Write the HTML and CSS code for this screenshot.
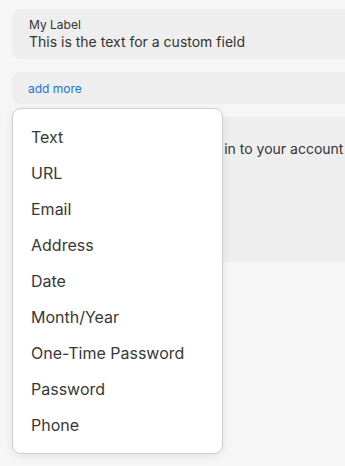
FILE: index.html
```html
<!DOCTYPE html>
<html>
<head>
<meta charset="utf-8">
<link rel="stylesheet" href="styles.css">
</head>
<body>
<div class="page">
  <div class="card field">
    <div class="label">My Label</div>
    <div class="value">This is the text for a custom field</div>
  </div>
  <div class="card add">
    <a class="link" href="#">add more</a>
  </div>
  <div class="card info">
    <p class="info-text">Use this code when you log in to your account</p>
  </div>
</div>
<ul class="menu">
  <li>Text</li>
  <li>URL</li>
  <li>Email</li>
  <li>Address</li>
  <li>Date</li>
  <li>Month/Year</li>
  <li>One-Time Password</li>
  <li>Password</li>
  <li>Phone</li>
</ul>
</body>
</html>
```
FILE: styles.css
```css
html, body {
  margin: 0;
  padding: 0;
  background: #f6f6f6;
  font-family: Inter, "Noto Sans", sans-serif;
  color: #333;
  overflow: hidden;
}
.page {
  padding: 9px 0 0 12px;
  display: flex;
  flex-direction: column;
  gap: 13px;
  margin-right: -20px;
}
.card {
  background: #eeeeee;
  border-radius: 8px;
}
.field {
  height: 50px;
  box-sizing: border-box;
  padding: 9px 17px;
}
.label {
  font-size: 12px;
  line-height: 14px;
}
.value {
  font-size: 14px;
  line-height: 19px;
}
.add {
  height: 32px;
  display: flex;
  align-items: center;
  padding: 0 16px;
}
.link {
  color: #1a73d9;
  font-size: 12px;
  text-decoration: none;
}
.info {
  height: 145px;
  box-sizing: border-box;
  padding: 22px 25px;
}
.info-text {
  margin: 0;
  font-size: 14px;
  line-height: 20px;
  white-space: nowrap;
}
.menu {
  position: absolute;
  top: 108px;
  left: 12px;
  width: 211px;
  box-sizing: border-box;
  margin: 0;
  padding: 10px 0;
  list-style: none;
  background: #fff;
  border: 1px solid #cfcfcf;
  border-radius: 9px;
  box-shadow: 0 2px 10px rgba(0,0,0,0.08);
}
.menu li {
  height: 36px;
  display: flex;
  align-items: center;
  padding: 0 18px;
  font-size: 16px;
  color: #383838;
}
```
